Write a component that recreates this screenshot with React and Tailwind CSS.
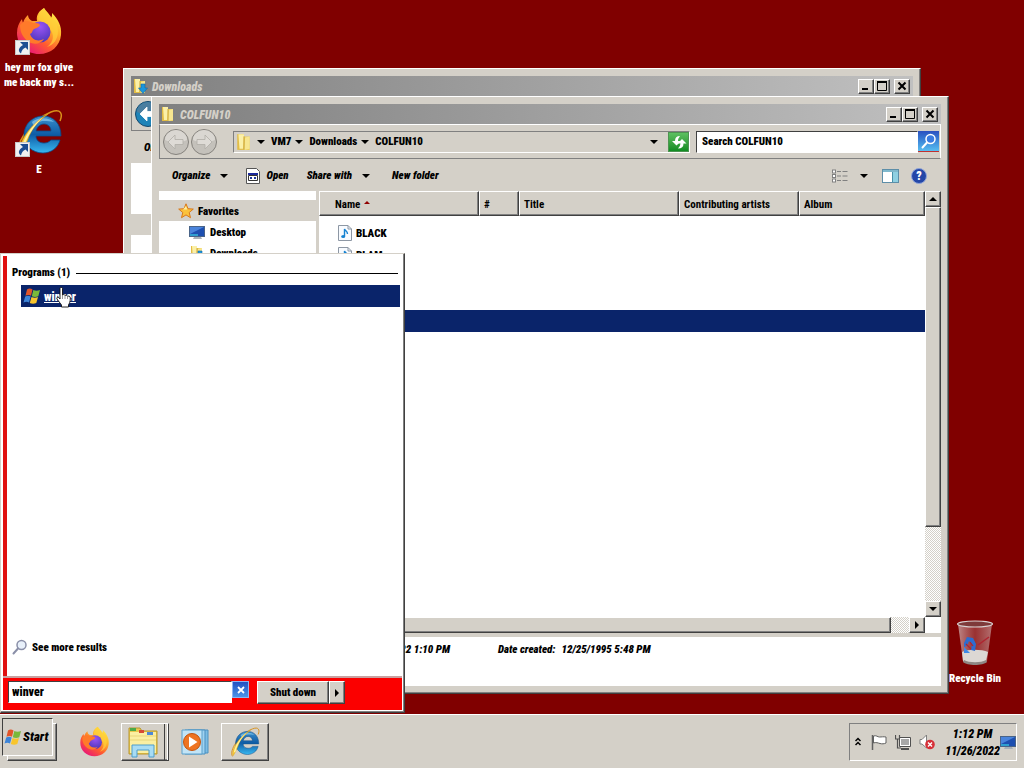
import React, { useState } from "react";

const raised =
  "border border-t-white border-l-white border-r-[#404040] border-b-[#404040] bg-[#d4d0c8] shadow-[inset_-1px_-1px_0_#808080]";
const sunken =
  "border border-t-[#808080] border-l-[#808080] border-r-white border-b-white";
const dither =
  "bg-[conic-gradient(#ffffff_25%,#d4d0c8_0_50%,#ffffff_0_75%,#d4d0c8_0)] bg-[length:2px_2px]";

/* ---------- icons ---------- */

const FirefoxIcon = ({ className }) => (
  <svg viewBox="0 0 48 48" className={className} aria-hidden="true">
    <defs>
      <linearGradient id="foxBody" x1="0.85" y1="0.05" x2="0.2" y2="0.95">
        <stop offset="0" stopColor="#fff04a" />
        <stop offset="0.35" stopColor="#ffb02a" />
        <stop offset="0.65" stopColor="#ff5a30" />
        <stop offset="1" stopColor="#e8157a" />
      </linearGradient>
      <radialGradient id="foxGlobe" cx="0.5" cy="0.25" r="0.8">
        <stop offset="0" stopColor="#9a55f5" />
        <stop offset="1" stopColor="#4a35b8" />
      </radialGradient>
    </defs>
    <path
      d="M29 1c2 3 5 5 7 10 1-1 1-3 1-5 6 6 10 13 9 22-1 11-10 19-22 19S2 38 2 26c0-6 2-10 5-14 0 2 1 3 1 4 1-4 3-6 5-8 0 3 2 5 4 6h5c-1-6 2-10 7-13z"
      fill="url(#foxBody)"
    />
    <path
      d="M29 1c2 6 14 11 14 23 0 9-5 14-11 16 7-5 8-13 2-19-3-3-10-5-11-9 0-4 2-8 6-11z"
      fill="#ffd23a"
      opacity="0.7"
    />
    <circle cx="25" cy="25" r="10.500" fill="url(#foxGlobe)" />
    <path
      d="M5 18c3-4 8-5 13-2 3 0 6 0 7 2-1 3-5 3-7 5-1 2-1 3-3 4 2 6 8 8 14 5-3 5-10 6-15 3-6-4-9-10-9-17z"
      fill="#ff7a2a"
    />
  </svg>
);

const IeIcon = ({ className }) => (
  <svg viewBox="0 0 48 48" className={className} aria-hidden="true">
    <defs>
      <linearGradient id="ieBlue" x1="0" y1="0" x2="0" y2="1">
        <stop offset="0" stopColor="#3a90cc" />
        <stop offset="0.5" stopColor="#0f5ca6" />
        <stop offset="1" stopColor="#38b8f0" />
      </linearGradient>
    </defs>
    <path d="M4 47C-2 38 14 12 36 3c10-4 12 2 9 9" fill="none" stroke="#d8901a" strokeWidth="1.5" />
    <path
      d="M28 7c11 0 18 8 18 20H21c0 4 3 7 8 7 3 0 5-1 7-3h9c-2 8-9 13-17 13-11 0-19-8-19-18S17 7 28 7zm-7 15h15c0-4-3-7-7-7s-7 3-8 7z"
      fill="url(#ieBlue)"
      stroke="#0a4a88"
      strokeWidth="0.8"
    />
    <path d="M17 13c4-4 16-6 22 0-4-1-6-1-10-1-5 0-8 2-10 6z" fill="#8ccbf0" opacity="0.7" />
    <path
      d="M5 46C1 38 13 16 33 5c-11 8-17 16-20 25C10 37 8 42 5 46z"
      fill="#f6c832"
      stroke="#d99c1c"
      strokeWidth="0.6"
    />
    <path d="M6 41c2-12 11-25 22-33-9 9-16 19-19 31z" fill="#fff2a0" />
  </svg>
);

const ShortcutArrow = () => (
  <svg viewBox="0 0 15 15" className="absolute bottom-0 left-0 size-[15px]" aria-hidden="true">
    <rect x="0.5" y="0.5" width="14" height="14" fill="#f0f0f0" stroke="#c8c8c8" />
    <path d="M5 2h8v8l-2.500-2.500C8 8.500 6.500 10.500 6 13.500 2.500 11 3.500 7.500 8 5z" fill="#1d4f93" />
  </svg>
);

const FolderIcon = ({ className = "size-4", arrow }) => (
  <svg viewBox="0 0 16 16" className={className} aria-hidden="true">
    <path d="M2 1h6v14H2z" fill="#e3bd45" />
    <path d="M3 1h5v13H4z" fill="#fbf0a8" />
    <path d="M8 3h5v12H7z" fill="#ecd05c" />
    <path d="M9 4l4-1v11l-5 1z" fill="#f7e690" />
    <path d="M8 3v12" stroke="#c49a2c" strokeWidth="0.8" />
    {arrow && <path d="M9 6h4v4h2.500L11 15.500 6.500 10H9z" fill="#1b96dc" stroke="#0d6aa8" strokeWidth="0.6" />}
  </svg>
);

const MonitorIcon = ({ className = "h-3.5 w-4" }) => (
  <svg viewBox="0 0 16 14" className={className} aria-hidden="true">
    <rect x="0.500" y="1.500" width="15" height="10" fill="#1d4fb0" stroke="#4a6488" />
    <path d="M1 2h14L1 9z" fill="#4a84dc" />
    <path d="M1 9h8v2H1z" fill="#2f9fd0" />
    <path d="M5 12h7l1 2H4z" fill="#a8b0b8" />
  </svg>
);

const StarIcon = () => (
  <svg viewBox="0 0 16 16" className="size-4" aria-hidden="true">
    <path
      d="M8 .8l2 4.900 5.300.4-4.100 3.400 1.300 5.200L8 11.900l-4.500 2.800 1.300-5.200L.7 6.100 6 5.700z"
      fill="#fbc23c"
      stroke="#d9781a"
    />
    <path d="M8 3l1.200 3.600H5z" fill="#fff0a0" />
  </svg>
);

const MusicIcon = () => (
  <svg viewBox="0 0 14 16" className="h-4 w-3.5" aria-hidden="true">
    <path d="M.5.5h9.500l3.500 3.500v11.500H.5z" fill="#f8fbff" stroke="#8d97a4" />
    <path d="M10 .5v3.500h3.500" fill="none" stroke="#8d97a4" />
    <path d="M6.500 11V4c1 2 3 2 3 5" fill="none" stroke="#1683d2" strokeWidth="1.400" />
    <ellipse cx="5.200" cy="11.500" rx="2" ry="1.600" fill="#1683d2" />
  </svg>
);

const FlagLogo = ({ className }) => (
  <svg viewBox="0 0 18 18" className={className} aria-hidden="true">
    <path d="M4 2.500c2-1.500 4-1 5.500 0L8 8.700c-1.500-1-3.500-1-5.500 0z" fill="#e2552a" />
    <path d="M10.300 3c2 1 4.500 1 6.700 0l-1.700 6.200c-2 1-4.500 1-6.500 0z" fill="#79b93a" />
    <path d="M2.200 9.500c2-1 4-1 5.500 0L6 15.500c-1.500-1-3.500-1-5.500 0z" fill="#3d84d8" />
    <path d="M8.500 10c2 1 4.500 1 6.500 0l-1.700 6c-2 1-4.500 1-6.500 0z" fill="#f8c52c" />
  </svg>
);

const Caret = () => (
  <svg viewBox="0 0 8 4" className="h-1 w-2 shrink-0" aria-hidden="true">
    <path d="M0 0h8L4 4z" fill="#000" />
  </svg>
);

const Magnifier = ({ className, stroke = "#8a8fa8", fill = "#e8f0fa" }) => (
  <svg viewBox="0 0 16 16" className={className} aria-hidden="true">
    <circle cx="9.500" cy="6" r="4.500" fill={fill} stroke={stroke} strokeWidth="1.500" />
    <path d="M6 9.500L1.500 14.500" stroke={stroke} strokeWidth="2" strokeLinecap="round" />
  </svg>
);

const RefreshIcon = () => (
  <svg viewBox="0 0 16 16" className="size-4" aria-hidden="true">
    <path d="M9 2Q4 2 4 7H1l4.500 4.500L10 7H7Q7 4.500 9 2z" fill="#fff" />
    <path d="M7 14.500Q12.500 14.500 12.500 9.500h3L11 5 6.500 9.500H9.500Q9.500 12 7 14.500z" fill="#fff" />
  </svg>
);

const ViewIcon = () => (
  <svg viewBox="0 0 16 14" className="h-3.5 w-4" aria-hidden="true">
    {[1, 5.5, 10].map((y) => (
      <g key={y}>
        <rect x="0.500" y={y} width="3" height="3" fill="#fff" stroke="#808080" />
        <path d={`M5 ${y + 1.5}h4M10.500 ${y + 1.5}h5`} stroke="#808080" />
      </g>
    ))}
  </svg>
);

const PaneIcon = () => (
  <svg viewBox="0 0 17 14" className="h-3.5 w-[17px]" aria-hidden="true">
    <rect x="0.500" y="0.500" width="16" height="13" fill="#fff" stroke="#5d8ea8" />
    <path d="M1 1h15v2H1z" fill="#7fb8cc" />
    <path d="M10.500 3h5.500v10h-5.500z" fill="#8fd0e2" />
    <path d="M10.500 3v10" stroke="#4890a8" />
  </svg>
);

const AppIcon = () => (
  <svg viewBox="0 0 14 16" className="h-4 w-3.5" aria-hidden="true">
    <path d="M.5.5h10l3 3v12H.5z" fill="#fff" stroke="#555" />
    <path d="M2 5h10v2H2z" fill="#1c2a9c" />
    <path d="M2.500 7.500h9v5h-9z" fill="#fff" stroke="#333" />
    <path d="M4 9h2v2H4zM8 9h2v2H8z" fill="#223a9c" />
  </svg>
);

const BinIcon = () => (
  <svg viewBox="0 0 38 46" className="h-[46px] w-[38px]" aria-hidden="true">
    <defs>
      <linearGradient id="binGlass" x1="0" x2="1">
        <stop offset="0" stopColor="#d0b4b4" stopOpacity="0.75" />
        <stop offset="0.5" stopColor="#b05a5a" stopOpacity="0.55" />
        <stop offset="1" stopColor="#c8a0a0" stopOpacity="0.7" />
      </linearGradient>
    </defs>
    <path d="M2 4l5 37c4 4 20 4 24 0l5-37z" fill="url(#binGlass)" />
    <path d="M6 32c5-3 20-3 26 0l-2 9c-4 4-19 4-23 0z" fill="#dcd8d4" />
    <path d="M8 40c5 3 17 3 22 0l1 2c-4 4-20 4-24 0z" fill="#8e8784" />
    <ellipse cx="19" cy="4" rx="17.500" ry="3" fill="#7e3a3a" stroke="#d8d0d0" strokeWidth="1.200" />
    <path d="M8 23l3-6 6 1 3 6-1 7-4-1 1-6-3-3-2 5-3 1z" fill="#2d6cd0" />
    <path d="M8 27l6 6H8z" fill="#3f8ae6" />
    <path d="M10 24l5 5M14 22l3 4" stroke="#b02430" strokeWidth="1.200" />
    <path d="M22 25l11-8" stroke="#b02430" strokeWidth="1.500" />
  </svg>
);

const ExplorerIcon = () => (
  <svg viewBox="0 0 32 32" className="size-8" aria-hidden="true">
    <path d="M2 2h11l2 3h15v23H2z" fill="#e9c94e" stroke="#b8962c" />
    <path d="M3 6h26v21H3z" fill="#fbefa2" />
    <path d="M3 2h6v3H3z" fill="#4caa48" />
    <path d="M12 4h5v3h-5z" fill="#d84a34" />
    <path d="M20 6h6v3h-6z" fill="#4c88d8" />
    <path d="M3 10h26M3 14h26" stroke="#e8d57a" />
    <path d="M5 31V19h22v12h-5v-7H10v7z" fill="#a8dcf4" stroke="#4d9dcc" />
  </svg>
);

const PlayerIcon = () => (
  <svg viewBox="0 0 28 28" className="size-7" aria-hidden="true">
    <path d="M7 2h20v23H7z" fill="#7cbde4" stroke="#4a90c0" />
    <path d="M4 2h20v24H4z" fill="#9fd2f0" stroke="#4a90c0" />
    <path d="M1 2h20v24H1z" fill="#c2e4f6" stroke="#5aa0cc" />
    <circle cx="11" cy="14" r="8.500" fill="#ee7422" stroke="#c4540e" />
    <path d="M8 8.500l8.500 5.500L8 19.500z" fill="#fff" />
  </svg>
);

const NavCircle = ({ active, flip }) => (
  <svg viewBox="0 0 28 28" className={flip ? "size-7 -scale-x-100" : "size-7"} aria-hidden="true">
    <circle cx="14" cy="14" r="12.500" fill={active ? "#1f84b8" : "#c4c1bb"} stroke={active ? "#16486c" : "#85827d"} />
    <path d="M3 12a11 10 0 0 1 22 0c-6 3-16 3-22 0z" fill={active ? "#4a7ea0" : "#dad7d2"} />
    <path
      d="M6 14l7-7v4.500h8v5h-8V21z"
      fill={active ? "#fff" : "#dedbd6"}
      stroke={active ? "#fff" : "#b0ada7"}
      strokeWidth="0.800"
    />
  </svg>
);

/* ---------- window pieces ---------- */

const CaptionButton = ({ label, children }) => (
  <button aria-label={label} className={`flex h-[15px] w-4 items-center justify-center ${raised}`}>
    <svg viewBox="0 0 10 10" className="size-2.5" fill="none" stroke="#000" aria-hidden="true">
      {children}
    </svg>
  </button>
);

const TitleBar = ({ title, arrow }) => (
  <div className="flex h-5 shrink-0 items-center bg-linear-to-r from-[#808080] to-[#c0c0c0] pr-[3px] pl-px">
    <FolderIcon arrow={arrow} />
    <h2 className="ml-1 flex-1 pt-0.5 text-[12px] italic text-[#d4d0c8]">{title}</h2>
    <CaptionButton label="Minimize">
      <path d="M1 8h6" strokeWidth="2" />
    </CaptionButton>
    <CaptionButton label="Maximize">
      <path d="M.5 1.500h9v8h-9z" />
      <path d="M0 1h10" strokeWidth="2" />
    </CaptionButton>
    <div className="w-1" />
    <CaptionButton label="Close">
      <path d="M1.500 1.500l7 7M8.500 1.500l-7 7" strokeWidth="2" />
    </CaptionButton>
  </div>
);

const Crumb = ({ children }) => (
  <button className="flex items-center gap-1.5">
    <Caret />
    {children}
  </button>
);

const AddressBar = ({ title, backActive, crumbs }) => (
  <div className="flex h-[35px] shrink-0 items-center border border-t-white border-r-white border-b-[#808080] border-l-[#808080] pr-px pl-0.5">
    <button aria-label="Back">
      <NavCircle active={backActive} />
    </button>
    {crumbs && (
      <>
        <button aria-label="Forward">
          <NavCircle flip />
        </button>
        <div className={`ml-[15px] flex h-[22px] flex-1 items-center ${sunken}`}>
          <FolderIcon className="mr-1 ml-px size-[18px]" />
          <div className="flex flex-1 items-center gap-1">
            {crumbs.map((c) => (
              <Crumb key={c}>{c}</Crumb>
            ))}
          </div>
          <button aria-label="Previous locations" className="mr-2.5">
            <Caret />
          </button>
          <button
            aria-label="Refresh"
            className="flex h-5 w-[21px] items-center justify-center border border-[#4c9450] bg-linear-to-b from-[#5cc060] to-[#0d8c22]"
          >
            <RefreshIcon />
          </button>
        </div>
        <input
          type="text"
          aria-label={`Search ${title}`}
          placeholder={`Search ${title}`}
          className="ml-1.5 h-[22px] w-[222px] border border-t-[#404040] border-l-[#404040] border-r-white border-b-white bg-white px-[5px] text-[11px] font-black placeholder:text-black"
        />
        <button
          aria-label="Search"
          className="flex h-[21px] w-[21px] items-center justify-center border-b border-b-[#c03030] bg-linear-to-b from-[#2c50c0] to-[#58bdf0]"
        >
          <Magnifier className="size-4" stroke="#fff" fill="#3b7ce0" />
        </button>
      </>
    )}
  </div>
);

const Toolbar = ({ short }) => (
  <div className="flex h-8 shrink-0 items-center pt-0.5 pr-3.5 pl-[13px] italic">
    <button className="flex items-center gap-2.5 italic">
      Organize <Caret />
    </button>
    {!short && (
      <>
        <button className="ml-[18px] flex items-center gap-1.5 italic">
          <AppIcon /> Open
        </button>
        <button className="ml-[18px] flex items-center gap-2.5 italic">
          Share with <Caret />
        </button>
        <button className="ml-[22px] italic">New folder</button>
        <div className="ml-auto flex items-center gap-3">
          <button aria-label="Change your view">
            <ViewIcon />
          </button>
          <button aria-label="More options" className="mr-0.5">
            <Caret />
          </button>
          <button aria-label="Show the preview pane">
            <PaneIcon />
          </button>
          <button
            aria-label="Get help"
            className="flex size-4 items-center justify-center rounded-full border border-[#8fa4d8] bg-[#2447a8] text-[12px] text-white not-italic"
          >
            ?
          </button>
        </div>
      </>
    )}
  </div>
);

const favorites = [
  { name: "Desktop", icon: <MonitorIcon /> },
  { name: "Downloads", icon: <FolderIcon arrow /> },
];

const NavPane = () => (
  <nav className="w-[157px] shrink-0 bg-white pt-[9px]">
    <a href="#" className="flex h-[21px] items-center gap-1 bg-[#d4d0c8] pl-[19px]">
      <StarIcon />
      <span className="pt-0.5">Favorites</span>
    </a>
    <ul>
      {favorites.map((item) => (
        <li key={item.name}>
          <a href="#" className="flex h-[21px] items-center gap-[5px] pl-[30px]">
            {item.icon}
            <span className="pt-0.5">{item.name}</span>
          </a>
        </li>
      ))}
    </ul>
  </nav>
);

const ScrollButton = ({ label, d }) => (
  <button aria-label={label} className={`flex size-4 shrink-0 items-center justify-center ${raised}`}>
    <svg viewBox="0 0 8 8" className="size-2" aria-hidden="true">
      <path d={d} fill="#000" />
    </svg>
  </button>
);

const columns = [
  { name: "Name", width: "w-40" },
  { name: "#", width: "w-10" },
  { name: "Title", width: "w-40" },
  { name: "Contributing artists", width: "w-[120px]" },
  { name: "Album", width: "w-[126px]" },
];

const files = ["BLACK", "BLAM", "", "", "selected"];

const FileList = () => (
  <div className="flex min-w-0 flex-1 flex-col">
    <div className="flex min-h-0 flex-1">
      <div className="flex-1 overflow-hidden bg-white">
        <table className="w-full table-fixed border-collapse text-left">
          <thead>
            <tr>
              {columns.map((col) => (
                <th key={col.name} className={`h-[25px] p-0 ${col.width}`}>
                  <button
                    className={`flex h-[25px] w-full items-center gap-1 pt-0.5 ${
                      col.name === "Name" ? "pl-[15px]" : "pl-1"
                    } ${raised}`}
                  >
                    {col.name}
                    {col.name === "Name" && (
                      <svg viewBox="0 0 6 3" className="mb-1 h-[3px] w-1.5" aria-hidden="true">
                        <path d="M0 3h6L3 0z" fill="#900000" />
                      </svg>
                    )}
                  </button>
                </th>
              ))}
            </tr>
            <tr className="h-1.5" />
          </thead>
          <tbody>
            {files.map((file, i) => (
              <tr key={i} className={file === "selected" ? "bg-[#0a246a]" : ""}>
                <td colSpan={5} className="h-[22px] p-0">
                  {file && file !== "selected" && (
                    <span className="flex items-center gap-1 pl-[19px]">
                      <MusicIcon />
                      <span className="pt-0.5">{file}</span>
                    </span>
                  )}
                </td>
              </tr>
            ))}
          </tbody>
        </table>
      </div>
      <div className={`flex w-4 flex-col ${dither}`}>
        <ScrollButton label="Scroll up" d="M0 6h8L4 2z" />
        <div className={`h-80 ${raised}`} />
        <div className="flex-1" />
        <ScrollButton label="Scroll down" d="M0 2h8L4 6z" />
      </div>
    </div>
    <div className="flex h-4 bg-white pr-4">
      <div className={`flex flex-1 ${dither}`}>
        <div className={`flex-1 ${raised}`} />
        <div className="w-[18px]" />
        <ScrollButton label="Scroll right" d="M2 0v8l4-4z" />
      </div>
    </div>
  </div>
);

const WindowFrame = ({ title, arrow, place, children }) => (
  <section
    className={`absolute flex h-[598px] w-[798px] flex-col border border-t-white border-l-white border-r-[#404040] border-b-[#404040] bg-[#d4d0c8] p-[7px] shadow-[inset_-1px_-1px_0_#808080] ${place}`}
  >
    <TitleBar title={title} arrow={arrow} />
    {children}
  </section>
);

const DownloadsWindow = () => (
  <WindowFrame title="Downloads" arrow place="top-[68px] left-[123px]">
    <AddressBar title="Downloads" backActive />
    <Toolbar short />
    <div className="w-[157px] flex-1 bg-white pt-[51px]">
      <div className="h-[21px] bg-[#d4d0c8]" />
    </div>
  </WindowFrame>
);

const FolderWindow = () => (
  <WindowFrame title="COLFUN10" place="top-24 left-[151px]">
    <AddressBar title="COLFUN10" crumbs={["VM7", "Downloads", "COLFUN10"]} />
    <Toolbar />
    <div className="flex min-h-0 flex-1 gap-[3px]">
      <NavPane />
      <FileList />
    </div>
    <dl className="mt-1 flex h-[49px] shrink-0 gap-12 bg-white pt-[5px] italic">
      <div className="flex w-[291px] justify-end gap-1">
        <dt>Date modified:</dt>
        <dd>11/26/2022 1:10 PM</dd>
      </div>
      <div className="flex gap-1.5">
        <dt>Date created:</dt>
        <dd>12/25/1995 5:48 PM</dd>
      </div>
    </dl>
  </WindowFrame>
);

/* ---------- desktop ---------- */

const DesktopIcon = ({ label, place, shortcut, children }) => (
  <a href="#" className={`absolute flex w-20 flex-col items-center gap-[5px] text-center leading-[15px] text-white ${place}`}>
    <span className="relative">
      {children}
      {shortcut && <ShortcutArrow />}
    </span>
    <span>{label}</span>
  </a>
);

const HandCursor = () => (
  <svg viewBox="0 0 16 21" className="absolute top-[33px] left-[55px] h-[21px] w-4" aria-hidden="true">
    <path
      d="M4 1.500c0-1.500 2.500-1.500 2.500 0V8c1-.8 2.300-.4 2.500.5 1-.7 2.300-.2 2.500.8 1.500-.6 2.800.2 2.800 1.700 0 4-.8 5-1.800 7V20H5.500v-2L1 12c-.8-1.200.6-2.500 1.800-1.500L4 12z"
      fill="#fff"
      stroke="#111"
      strokeWidth="0.900"
    />
    <path d="M6.500 8v4M9 9v3M11.500 10v2" stroke="#555" strokeWidth="0.600" />
  </svg>
);

const StartMenu = () => {
  const [query, setQuery] = useState("winver");

  return (
    <section className="absolute bottom-px left-0 flex h-[460px] w-[405px] flex-col border border-t-[#d4d0c8] border-l-[#d4d0c8] border-r-[#404040] border-b-[#404040] bg-white p-0.5 shadow-[inset_-1px_-1px_0_#808080,inset_1px_1px_0_#ffffff]">
      <div className="flex flex-1 flex-col border-l-4 border-l-[#e01010] bg-white pt-[9px] pl-[5px]">
        <div className="flex items-center gap-1.5 pr-1">
          <h3>Programs (1)</h3>
          <div className="h-px flex-1 bg-black" />
        </div>
        <a href="#" className="mt-1 mr-0.5 ml-[9px] flex h-[22px] items-center gap-[3px] bg-[#0a246a] pl-0.5 text-[12px] text-white underline">
          <FlagLogo className="size-[18px]" />
          <span className="pt-0.5">winver</span>
        </a>
        <a href="#" className="mt-auto mb-5 flex items-center gap-1">
          <Magnifier className="size-4" />
          <span className="pt-0.5">See more results</span>
        </a>
      </div>
      <div className="flex h-[34px] items-start border-t-2 border-t-[#c8a0a0] bg-[#fb0000] pt-[3px] pl-[5px]">
        <input
          type="text"
          aria-label="Search programs and files"
          value={query}
          onChange={(e) => setQuery(e.target.value)}
          className="h-[22px] w-56 border border-t-[#404040] border-l-[#404040] border-r-white border-b-white bg-white px-[3px] text-[12px] font-black"
        />
        <button
          aria-label="Clear search"
          onClick={() => setQuery("")}
          className="flex size-[17px] items-center justify-center border border-[#8fb4f0] bg-linear-to-b from-[#2450c0] to-[#4c94e8]"
        >
          <svg viewBox="0 0 8 8" className="size-2" aria-hidden="true">
            <path d="M1 1l6 6M7 1L1 7" stroke="#fff" strokeWidth="1.800" />
          </svg>
        </button>
        <button className={`ml-2 h-[23px] w-[72px] ${raised}`}>Shut down</button>
        <button aria-label="Shut down options" className={`flex h-[23px] w-4 items-center justify-center ${raised}`}>
          <svg viewBox="0 0 4 8" className="h-2 w-1" aria-hidden="true">
            <path d="M0 0v8l4-4z" />
          </svg>
        </button>
      </div>
      <HandCursor />
    </section>
  );
};

/* ---------- taskbar ---------- */

const Tray = () => (
  <div className={`ml-auto flex h-[38px] items-center pl-[5px] ${sunken}`}>
    <button aria-label="Show hidden icons">
      <svg viewBox="0 0 6 9" className="h-[9px] w-1.5" fill="none" stroke="#000" strokeWidth="1.500" aria-hidden="true">
        <path d="M.5 4L3 1.500 5.500 4M.5 8L3 5.500 5.500 8" />
      </svg>
    </button>
    <svg viewBox="0 0 16 16" className="ml-2.5 size-4" aria-hidden="true">
      <path d="M1.500 1v15" stroke="#606060" strokeWidth="1.500" />
      <path d="M2.500 2c3-1 4 1 6 1s4-.5 6.500 0v6c-2 1-4 1-6 .5S5 8 2.500 9z" fill="#fff" stroke="#606060" />
    </svg>
    <svg viewBox="0 0 16 16" className="ml-2 size-4" aria-hidden="true">
      <path d="M4.500 3.500h11v9h-11z" fill="#fff" stroke="#505050" />
      <path d="M6 5h8v6H6z" fill="#a8a8a8" />
      <path d="M6 15h8" stroke="#505050" strokeWidth="2" />
      <path d="M.5 1v4h4V1M2.500 5v9H6" fill="none" stroke="#505050" strokeWidth="1.200" />
    </svg>
    <svg viewBox="0 0 16 16" className="ml-2 size-4" aria-hidden="true">
      <path d="M1 5.500h2L7.500 1v13L3 10H1z" fill="#fff" stroke="#808080" />
      <circle cx="11" cy="10.500" r="4.800" fill="#d63038" />
      <path d="M9 8.500l4 4M13 8.500l-4 4" stroke="#fff" strokeWidth="1.400" />
    </svg>
    <time className="ml-2.5 pt-0.5 text-center text-[12px] leading-[17px] italic">
      <span className="block">1:12 PM</span>
      <span className="block">11/26/2022</span>
    </time>
    <button aria-label="Show desktop">
      <MonitorIcon />
    </button>
  </div>
);

const Taskbar = () => (
  <footer className="flex h-[54px] shrink-0 items-center border-t border-t-white bg-[#d4d0c8] pr-[7px] pl-0.5">
    <div className="relative h-[47px] w-[55px]">
      <div className={`mt-[5px] ml-[5px] h-[38px] ${raised}`} />
      <button className="absolute top-0 left-0 flex h-[38px] w-[51px] items-center gap-px border border-t-[#404040] border-l-[#404040] border-r-white border-b-white bg-[#d4d0c8] pl-px text-[13px] italic">
        <FlagLogo className="size-[18px] shrink-0" />
        Start
      </button>
    </div>
    <button aria-label="Firefox" className="ml-[22px]">
      <FirefoxIcon className="size-[31px]" />
    </button>
    <button aria-label="Windows Explorer" className={`ml-[11px] flex h-[38px] w-12 items-center pl-[5px] ${raised}`}>
      <ExplorerIcon />
      <span className="ml-auto h-9 w-1 border-r border-l border-l-[#404040] border-r-white" />
    </button>
    <button aria-label="Windows Media Player" className="ml-3">
      <PlayerIcon />
    </button>
    <button aria-label="Internet Explorer" className={`ml-3 flex h-[38px] w-12 items-center justify-center ${raised}`}>
      <IeIcon className="size-[30px]" />
    </button>
    <Tray />
  </footer>
);

export default function App() {
  return (
    <div className="flex h-screen flex-col overflow-hidden font-['Roboto_Condensed',Roboto,sans-serif] text-[11px] leading-4 font-black text-black">
      <main className="relative flex-1 overflow-hidden bg-[#800000]">
        <DesktopIcon label="hey mr fox give me back my s..." shortcut place="top-[7px] -left-px">
          <FirefoxIcon className="size-12" />
        </DesktopIcon>
        <DesktopIcon label="E" shortcut place="top-[109px] -left-px">
          <IeIcon className="size-12" />
        </DesktopIcon>
        <DesktopIcon label="Recycle Bin" place="right-[9px] bottom-7">
          <BinIcon />
        </DesktopIcon>
        <DownloadsWindow />
        <FolderWindow />
        <StartMenu />
      </main>
      <Taskbar />
    </div>
  );
}
